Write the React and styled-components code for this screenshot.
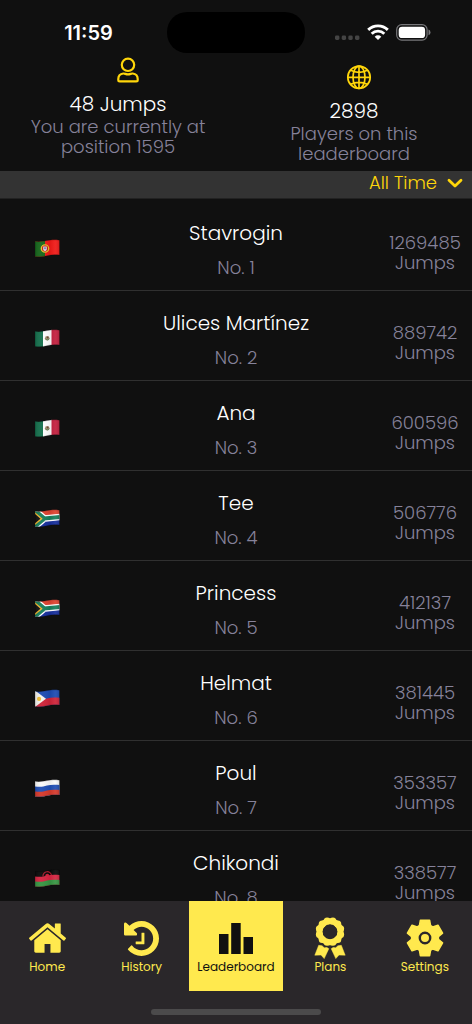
import React from 'react';
import styled, { createGlobalStyle } from 'styled-components';

const YELLOW = '#ffd60a';
const TAB_YELLOW = '#ffe94e';
const MUTED = '#86829a';

const GlobalStyle = createGlobalStyle`
  * { box-sizing: border-box; }
  body {
    margin: 0;
    background: #101010;
    color: #fff;
    font-family: Poppins, Inter, "Noto Sans", sans-serif;
    font-weight: 300;
    -webkit-font-smoothing: antialiased;
  }
  h2, p, ol { margin: 0; padding: 0; }
`;

const Screen = styled.div`
  height: 100vh;
  display: flex;
  flex-direction: column;
  overflow: hidden;
`;

const StatusBar = styled.header`
  flex: none;
  display: grid;
  grid-template-columns: 1fr 138px 1fr;
  align-items: center;
  padding-top: 12px;
`;

const Clock = styled.time`
  font-family: Inter, sans-serif;
  font-size: 20px;
  line-height: 24px;
  font-weight: 600;
  text-align: center;
  padding-left: 10px;
`;

const Island = styled.div`
  height: 41px;
  border-radius: 20px;
  background: #000;
`;

const StatusIcons = styled.div`
  display: flex;
  align-items: center;
  gap: 7px;
  padding-left: 30px;
`;

const Summary = styled.section`
  flex: none;
  display: grid;
  grid-template-columns: 1fr 1fr;
  height: 118px;
`;

const Stat = styled.div`
  display: flex;
  flex-direction: column;
  align-items: center;
  text-align: center;
  padding: ${({ $low }) => ($low ? '11px 30px 0' : '4px 30px 0')};
`;

const StatIcon = styled.div`
  height: 26px;
  padding-left: ${({ $inset }) => $inset}px;
  margin-bottom: 9px;
`;

const StatValue = styled.h2`
  font-size: 20px;
  line-height: 25px;
  font-weight: 300;
`;

const StatText = styled.p`
  font-size: 18px;
  line-height: 20px;
  color: ${MUTED};
`;

const FilterBar = styled.div`
  flex: none;
  height: 28px;
  display: flex;
  justify-content: flex-end;
  background: #333;
  border-bottom: 1px solid #222;
`;

const FilterLabel = styled.label`
  display: flex;
  align-items: center;
  gap: 10px;
  padding: 0 9px 3px 0;
  color: ${YELLOW};
`;

const FilterSelect = styled.select`
  appearance: none;
  border: 0;
  padding: 0;
  background: transparent;
  color: inherit;
  font: inherit;
  font-size: 18px;
  line-height: 24px;
`;

const Players = styled.ol`
  flex: 1;
  min-height: 0;
  overflow: hidden;
  list-style: none;
  padding-top: 2px;
`;

const PlayerRow = styled.li`
  height: 90px;
  display: grid;
  grid-template-columns: 94px 1fr 94px;
  border-bottom: 1px solid #303030;
`;

const FlagCell = styled.div`
  display: flex;
  justify-content: center;
  padding-top: 38px;
`;

const Identity = styled.div`
  text-align: center;
  padding-top: 20px;
`;

const PlayerName = styled.h2`
  font-size: 20px;
  line-height: 24px;
  font-weight: 300;
  margin-bottom: 11px;
`;

const Rank = styled.p`
  font-size: 18px;
  line-height: 24px;
  color: ${MUTED};
`;

const Score = styled.p`
  font-size: 18px;
  line-height: 20px;
  color: ${MUTED};
  text-align: center;
  padding-top: 32px;
`;

const Footer = styled.footer`
  flex: none;
  background: #2a272a;
`;

const Tabs = styled.nav`
  display: grid;
  grid-template-columns: repeat(5, 1fr);
`;

const Tab = styled.button`
  height: 90px;
  border: 0;
  padding: 16px 0 0;
  display: flex;
  flex-direction: column;
  align-items: center;
  font: inherit;
  font-size: 12px;
  line-height: 16px;
  font-weight: 400;
  background: ${({ $active }) => ($active ? TAB_YELLOW : 'transparent')};
  color: ${({ $active }) => ($active ? '#101010' : TAB_YELLOW)};
`;

const TabIcon = styled.span`
  height: 42px;
  display: flex;
  align-items: center;
`;

const HomeIndicator = styled.div`
  width: 36%;
  height: 6px;
  margin: 18px auto 9px;
  border-radius: 3px;
  background: #4b4a4b;
`;

const SignalIcon = () => (
  <svg width="25" height="20" viewBox="0 0 25 20" fill="#444" aria-hidden="true">
    {[0, 6.7, 13.3, 20].map((x) => (
      <rect key={x} x={x} y="12.500" width="4.4" height="4.4" rx="1.4" />
    ))}
  </svg>
);

const WifiIcon = () => (
  <svg width="22" height="17" viewBox="0 0 22 17" fill="none" stroke="#fff" strokeWidth="2.9" aria-hidden="true">
    <path d="M1.200 5.900a14 14 0 0 1 19.600 0" />
    <path d="M4.700 9.700a9 9 0 0 1 12.600 0" />
    <path d="M11 16l-3.300-3.300a4.600 4.600 0 0 1 6.600 0z" fill="#fff" stroke="none" />
  </svg>
);

const BatteryIcon = () => (
  <svg width="35" height="17" viewBox="0 0 35 17" aria-hidden="true">
    <rect x=".7" y=".7" width="30.400" height="15.400" rx="5" fill="none" stroke="#77777a" strokeWidth="1.2" />
    <rect x="2.700" y="2.700" width="26.400" height="11.400" rx="3.400" fill="#fff" />
    <path d="M32.500 5.600q2 .7 2 2.800t-2 2.800z" fill="#77777a" />
  </svg>
);

const UserIcon = () => (
  <svg width="22" height="26" viewBox="0 0 22 26" fill="none" stroke={YELLOW} strokeWidth="2.200" strokeLinejoin="round" aria-hidden="true">
    <circle cx="11" cy="7.800" r="6.200" />
    <path d="M6.300 16.500C3.200 16.900 1.300 19 1.300 22v.9q0 1.400 1.400 1.400h16.600q1.400 0 1.400-1.400V22c0-3-1.900-5.100-5-5.500-1.600-.1-2.500.9-4.700.9s-3.100-1-4.700-.9z" />
  </svg>
);

const GlobeIcon = () => (
  <svg width="26" height="26" viewBox="0 0 26 26" fill="none" stroke={YELLOW} strokeWidth="1.700" aria-hidden="true">
    <circle cx="13" cy="13.300" r="11.200" />
    <ellipse cx="13" cy="13.300" rx="6" ry="11.200" />
    <path d="M13 2.300v22M2 13.300h22M4.800 6.300c4.400 2.700 12 2.700 16.400 0M4.800 20.300c4.400-2.700 12-2.700 16.400 0" />
  </svg>
);

const ChevronIcon = () => (
  <svg width="16" height="10" viewBox="0 0 16 10" fill="none" stroke={YELLOW} strokeWidth="2.800" strokeLinecap="round" strokeLinejoin="round" aria-hidden="true">
    <path d="M2 2.200l6 5.800 6-5.800" />
  </svg>
);

const HomeIcon = () => (
  <svg width="37" height="30" viewBox="26 240 1612 1306" fill="currentColor" aria-hidden="true">
    <path d="M1408 992v480q0 26-19 45t-45 19H960v-384H704v384H320q-26 0-45-19t-19-45V992q0-1 .5-3t.5-3l575-474 575 474q1 2 1 6zm223-69l-62 74q-8 9-21 11h-3q-13 0-21-7L832 424 140 1001q-12 8-24 7-13-2-21-11l-62-74q-8-10-7-23.500T37 878l719-599q32-26 76-26t76 26l244 204V288q0-14 9-23t23-9h192q14 0 23 9t9 23v408l219 182q10 8 11 21.500t-7 23.500z" />
  </svg>
);

const HistoryIcon = () => (
  <svg width="35" height="35" viewBox="0 -128 1536 1536" fill="currentColor" aria-hidden="true">
    <path d="M1536 640q0 156-61 298t-164 245-245 164-298 61q-172 0-327-72.500T177 1131q-7-10-6.500-22.500t8.500-20.500l137-138q10-9 25-9 16 2 23 12 73 95 179 147t225 52q104 0 198.500-40.500T1130 1002t109.500-163.500T1280 640t-40.500-198.500T1130 278 966.500 168.500 768 128q-98 0-188 35.500T420 265l137 138q31 30 14 69-17 40-59 40H64q-26 0-45-19T0 448V0q0-42 40-59 39-17 69 14l130 129Q346-17 483.500-72.500T768-128q156 0 298 61t245 164 164 245 61 298zM896 416v448q0 14-9 23t-23 9H544q-14 0-23-9t-9-23v-64q0-14 9-23t23-9h224V416q0-14 9-23t23-9h64q14 0 23 9t9 23z" />
  </svg>
);

const LeaderboardIcon = () => (
  <svg width="34" height="31" viewBox="0 0 34 31" fill="currentColor" aria-hidden="true">
    <path d="M0 11h9.500v20H0zM12.200 0h9.500v31h-9.500zM24.500 14H34v17h-9.500z" />
  </svg>
);

const scallops = Array.from({ length: 12 }, (_, i) => {
  const a = ((i + 0.5) * Math.PI) / 6;
  return { cx: 16 + 11 * Math.sin(a), cy: 14.7 - 11 * Math.cos(a) };
});

const AwardIcon = () => (
  <svg width="32" height="42" viewBox="0 0 32 42" fill="currentColor" aria-hidden="true">
    {scallops.map((s, i) => (
      <circle key={i} cx={s.cx} cy={s.cy} r="3.500" />
    ))}
    <circle cx="16" cy="14.700" r="10.500" fill="none" stroke="currentColor" strokeWidth="6" />
    <path d="M4.700 28.300l3.400.5 2.200 2 2.600-.3 1.900 1.200-4.600 9.900-3.200-3.600-6.200.2zM27.300 28.300l-3.400.5-2.200 2-2.600-.3-1.900 1.200 4.600 9.900 3.200-3.600 6.200.2z" stroke="currentColor" strokeWidth=".5" strokeLinejoin="round" />
  </svg>
);

const GearIcon = () => (
  <svg width="40" height="40" viewBox="-20 -20 40 40" fill="currentColor" aria-hidden="true">
    <circle r="10.300" fill="none" stroke="currentColor" strokeWidth="7.800" />
    <circle r="4" />
    {[0, 60, 120, 180, 240, 300].map((angle) => (
      <path
        key={angle}
        d="M-4.600-17.600h9.200l1.100 6.200h-11.400z"
        transform={`rotate(${angle})`}
        stroke="currentColor"
        strokeWidth="1.600"
        strokeLinejoin="round"
      />
    ))}
  </svg>
);

const WAVE = 'M0 2.200C3 3 7 2.600 12 1.600S20 .6 24.500 1.200V16C20 15.400 16 15.700 12 16.700S4 18 0 17.400z';

const bands = {
  pt: (
    <>
      <path d="M0 0h25v19H0z" fill="#f01a17" />
      <path d="M0 0h10v19H0z" fill="#16671b" />
      <circle cx="10" cy="9.500" r="3.700" fill="#b71813" stroke="#e3c62b" strokeWidth="1.300" />
      <path d="M8 7.200h4v3q0 1.500-2 2.300-2-.8-2-2.300z" fill="#e9e9f2" stroke="#d2252b" strokeWidth=".6" />
      <path d="M9.400 8.300h1.200v2H9.400z" fill="#2d55a5" />
    </>
  ),
  mx: (
    <>
      <path d="M0 0h9v19H0z" fill="#15704d" />
      <path d="M8 0h9v19H8z" fill="#fff" />
      <path d="M16.500 0H25v19h-8.500z" fill="#c3203f" />
      <circle cx="12.200" cy="9.200" r="2.300" fill="#a99476" />
      <path d="M10.300 9.700q1.800 2.600 4 .2" fill="none" stroke="#5c8555" strokeWidth=".9" />
      <circle cx="12.600" cy="8.500" r="1" fill="#6a4a35" />
    </>
  ),
  za: (
    <>
      <path d="M0 0h25v9H0z" fill="#de4431" />
      <path d="M0 9h25v10H0z" fill="#172f9c" />
      <path d="M0 1.500l9.500 8L25 8M0 17.500l9.500-8" fill="none" stroke="#fff" strokeWidth="6.600" />
      <path d="M0 1.500l9.500 8L25 8M0 17.500l9.500-8" fill="none" stroke="#187f5c" strokeWidth="4" />
      <path d="M-1 3.200l7.600 6.500L-1 16z" fill="#111" stroke="#efb32c" strokeWidth="1.400" />
    </>
  ),
  ph: (
    <>
      <path d="M0 0h25v19H0z" fill="#1d4cb3" />
      <path d="M0 10.200C5 11 8 10.600 12 9.400S20 8.300 25 8.800V19H0z" fill="#d02439" />
      <path d="M0 1.500l11 8.300L0 18z" fill="#f4f3ee" />
      <circle cx="4.100" cy="9.900" r="2.100" fill="#edbd34" />
    </>
  ),
  ru: (
    <>
      <path d="M0 0h25v19H0z" fill="#fafafa" />
      <path d="M0 7.400C5 8.200 8 7.800 12 6.600S20 5.500 25 6v13H0z" fill="#204fb5" />
      <path d="M0 12.400C5 13.200 8 12.800 12 11.600S20 10.500 25 11v8H0z" fill="#d63a2c" />
    </>
  ),
  mw: (
    <>
      <path d="M0 0h25v19H0z" fill="#090909" />
      <path d="M8 7.500a4.200 4.200 0 0 1 8.500-1" fill="none" stroke="#a81b2d" strokeWidth="1.200" />
      <circle cx="12.300" cy="6.700" r="2" fill="#c92038" />
      <path d="M0 7.400C5 8.200 8 7.800 12 6.600S20 5.500 25 6v13H0z" fill="#d62541" />
      <path d="M0 12.400C5 13.200 8 12.800 12 11.600S20 10.500 25 11v8H0z" fill="#379643" />
    </>
  ),
};

const Flag = ({ code, label, id }) => (
  <svg width="25" height="19" viewBox="0 0 25 19" role="img" aria-label={label}>
    <defs>
      <clipPath id={`wave-${id}`}>
        <path d={WAVE} />
      </clipPath>
      <linearGradient id={`fold-${id}`}>
        <stop offset="0" stopColor="#000" stopOpacity=".12" />
        <stop offset=".25" stopColor="#fff" stopOpacity=".04" />
        <stop offset=".6" stopColor="#000" stopOpacity=".06" />
        <stop offset=".8" stopColor="#fff" stopOpacity=".06" />
        <stop offset="1" stopColor="#000" stopOpacity=".15" />
      </linearGradient>
    </defs>
    <g clipPath={`url(#wave-${id})`}>
      {bands[code]}
      <path d="M0 0h25v19H0z" fill={`url(#fold-${id})`} />
    </g>
    <path d={WAVE} fill="none" stroke="#000" strokeOpacity=".25" strokeWidth=".8" />
  </svg>
);

const players = [
  { name: 'Stavrogin', flag: 'pt', country: 'Portugal', jumps: 1269485 },
  { name: 'Ulices Martínez', flag: 'mx', country: 'Mexico', jumps: 889742 },
  { name: 'Ana', flag: 'mx', country: 'Mexico', jumps: 600596 },
  { name: 'Tee', flag: 'za', country: 'South Africa', jumps: 506776 },
  { name: 'Princess', flag: 'za', country: 'South Africa', jumps: 412137 },
  { name: 'Helmat', flag: 'ph', country: 'Philippines', jumps: 381445 },
  { name: 'Poul', flag: 'ru', country: 'Russia', jumps: 353357 },
  { name: 'Chikondi', flag: 'mw', country: 'Malawi', jumps: 338577 },
];

const tabs = [
  { label: 'Home', icon: <HomeIcon /> },
  { label: 'History', icon: <HistoryIcon /> },
  { label: 'Leaderboard', icon: <LeaderboardIcon />, active: true },
  { label: 'Plans', icon: <AwardIcon /> },
  { label: 'Settings', icon: <GearIcon /> },
];

export default function App() {
  return (
    <>
      <GlobalStyle />
      <Screen>
        <StatusBar>
          <Clock>11:59</Clock>
          <Island />
          <StatusIcons>
            <SignalIcon />
            <WifiIcon />
            <BatteryIcon />
          </StatusIcons>
        </StatusBar>
        <Summary>
          <Stat>
            <StatIcon $inset={20}><UserIcon /></StatIcon>
            <StatValue>48 Jumps</StatValue>
            <StatText>You are currently at position 1595</StatText>
          </Stat>
          <Stat $low>
            <StatIcon $inset={10}><GlobeIcon /></StatIcon>
            <StatValue>2898</StatValue>
            <StatText>Players on this leaderboard</StatText>
          </Stat>
        </Summary>
        <FilterBar>
          <FilterLabel>
            <FilterSelect aria-label="Time period" defaultValue="all">
              <option value="all">All Time</option>
            </FilterSelect>
            <ChevronIcon />
          </FilterLabel>
        </FilterBar>
        <Players>
          {players.map((p, i) => (
            <PlayerRow key={p.name}>
              <FlagCell><Flag code={p.flag} label={p.country} id={i} /></FlagCell>
              <Identity>
                <PlayerName>{p.name}</PlayerName>
                <Rank>No. {i + 1}</Rank>
              </Identity>
              <Score>{p.jumps}<br />Jumps</Score>
            </PlayerRow>
          ))}
        </Players>
        <Footer>
          <Tabs>
            {tabs.map((t) => (
              <Tab key={t.label} type="button" $active={t.active} aria-current={t.active ? 'page' : undefined}>
                <TabIcon>{t.icon}</TabIcon>
                {t.label}
              </Tab>
            ))}
          </Tabs>
          <HomeIndicator />
        </Footer>
      </Screen>
    </>
  );
}
